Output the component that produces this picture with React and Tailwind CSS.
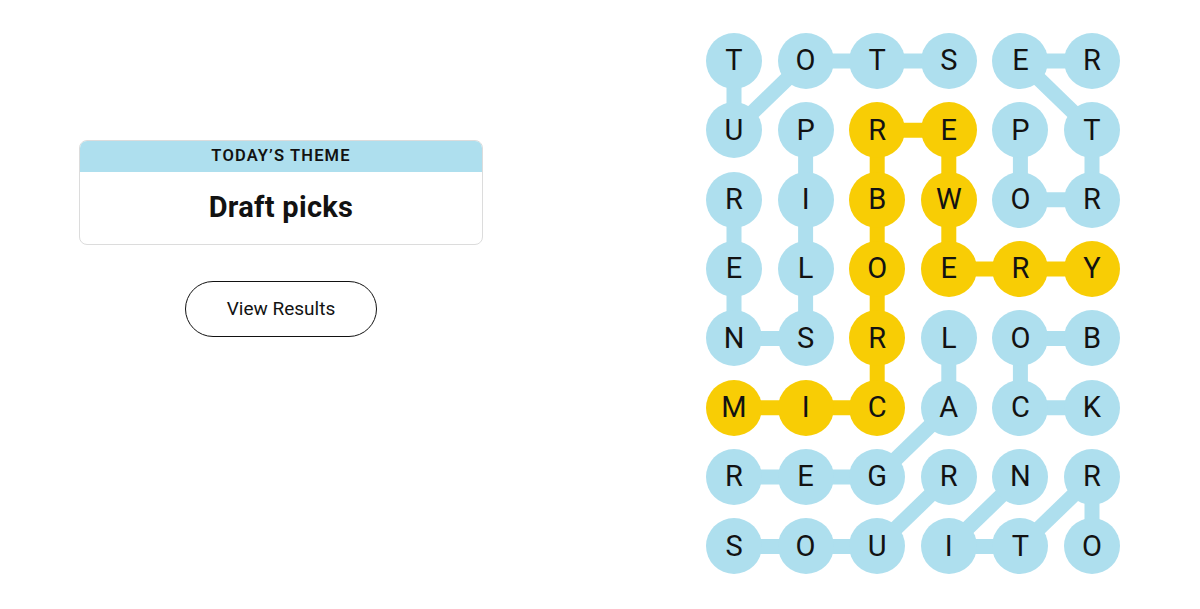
import React from "react";

const letters = [
  "TOTSER",
  "UPREPT",
  "RIBWOR",
  "ELOERY",
  "NSRLOB",
  "MICACK",
  "REGRNR",
  "SOUITO",
];

// spangram cells (row-col)
const gold = new Set(["1-2", "1-3", "2-2", "2-3", "3-2", "3-3", "3-4", "3-5", "4-2", "5-0", "5-1", "5-2"]);

const blueLinks = [
  [0, 0, 1, 0], [1, 0, 0, 1], [0, 1, 0, 2], [0, 2, 0, 3],
  [0, 4, 0, 5], [0, 4, 1, 5], [1, 5, 2, 5], [2, 5, 2, 4], [2, 4, 1, 4],
  [1, 1, 2, 1], [2, 1, 3, 1], [3, 1, 4, 1], [4, 1, 4, 0], [4, 0, 3, 0], [3, 0, 2, 0],
  [4, 3, 5, 3], [5, 3, 6, 2], [6, 2, 6, 1], [6, 1, 6, 0],
  [7, 0, 7, 1], [7, 1, 7, 2], [7, 2, 6, 3],
  [6, 4, 7, 3], [7, 3, 7, 4], [7, 4, 6, 5], [6, 5, 7, 5],
  [4, 4, 4, 5], [4, 4, 5, 4], [5, 4, 5, 5],
];

const goldLinks = [
  [5, 0, 5, 1], [5, 1, 5, 2], [5, 2, 4, 2], [4, 2, 3, 2], [3, 2, 2, 2], [2, 2, 1, 2],
  [1, 2, 1, 3], [1, 3, 2, 3], [2, 3, 3, 3], [3, 3, 3, 4], [3, 4, 3, 5],
];

const cx = (c) => 28 + c * 71.6;
const cy = (r) => 28 + r * 69.35;

function Board() {
  return (
    <div className="relative">
      <svg className="absolute inset-0" width="415" height="542">
        {blueLinks.map(([r1, c1, r2, c2], i) => (
          <line key={"b" + i} x1={cx(c1)} y1={cy(r1)} x2={cx(c2)} y2={cy(r2)} stroke="#aedfee" strokeWidth="15" />
        ))}
        {goldLinks.map(([r1, c1, r2, c2], i) => (
          <line key={"g" + i} x1={cx(c1)} y1={cy(r1)} x2={cx(c2)} y2={cy(r2)} stroke="#f8cd05" strokeWidth="15" />
        ))}
      </svg>
      <div className="relative grid grid-cols-[repeat(6,56px)] gap-x-[15.6px] gap-y-[13.35px]">
        {letters.map((row, r) =>
          row.split("").map((ch, c) => (
            <div
              key={r + "-" + c}
              className={
                "w-14 h-14 rounded-full flex items-center justify-center text-[29px] text-[#121212] " +
                (gold.has(r + "-" + c) ? "bg-[#f8cd05]" : "bg-[#aedfee]")
              }
            >
              {ch}
            </div>
          ))
        )}
      </div>
    </div>
  );
}

export default function App() {
  return (
    <div className="w-[1200px] h-[609px] bg-white flex font-['Roboto',sans-serif] text-[#121212]">
      <div className="w-[404px] ml-[79px] pt-[140px] flex flex-col items-center">
        <div className="w-full rounded-lg border border-[#dcdcdc] overflow-hidden">
          <div className="bg-[#aedfee] h-[31px] flex items-center justify-center text-[16.5px] font-semibold tracking-[0.07em]">
            TODAY’S THEME
          </div>
          <div className="h-[72px] flex items-center justify-center text-[29px] font-bold tracking-[0.01em]">
            Draft picks
          </div>
        </div>
        <button className="mt-[36px] w-[192px] h-[56px] rounded-full border-[1.5px] border-[#121212] text-[19px]">
          View Results
        </button>
      </div>
      <div className="ml-[223px] pt-[33px]">
        <Board />
      </div>
    </div>
  );
}
